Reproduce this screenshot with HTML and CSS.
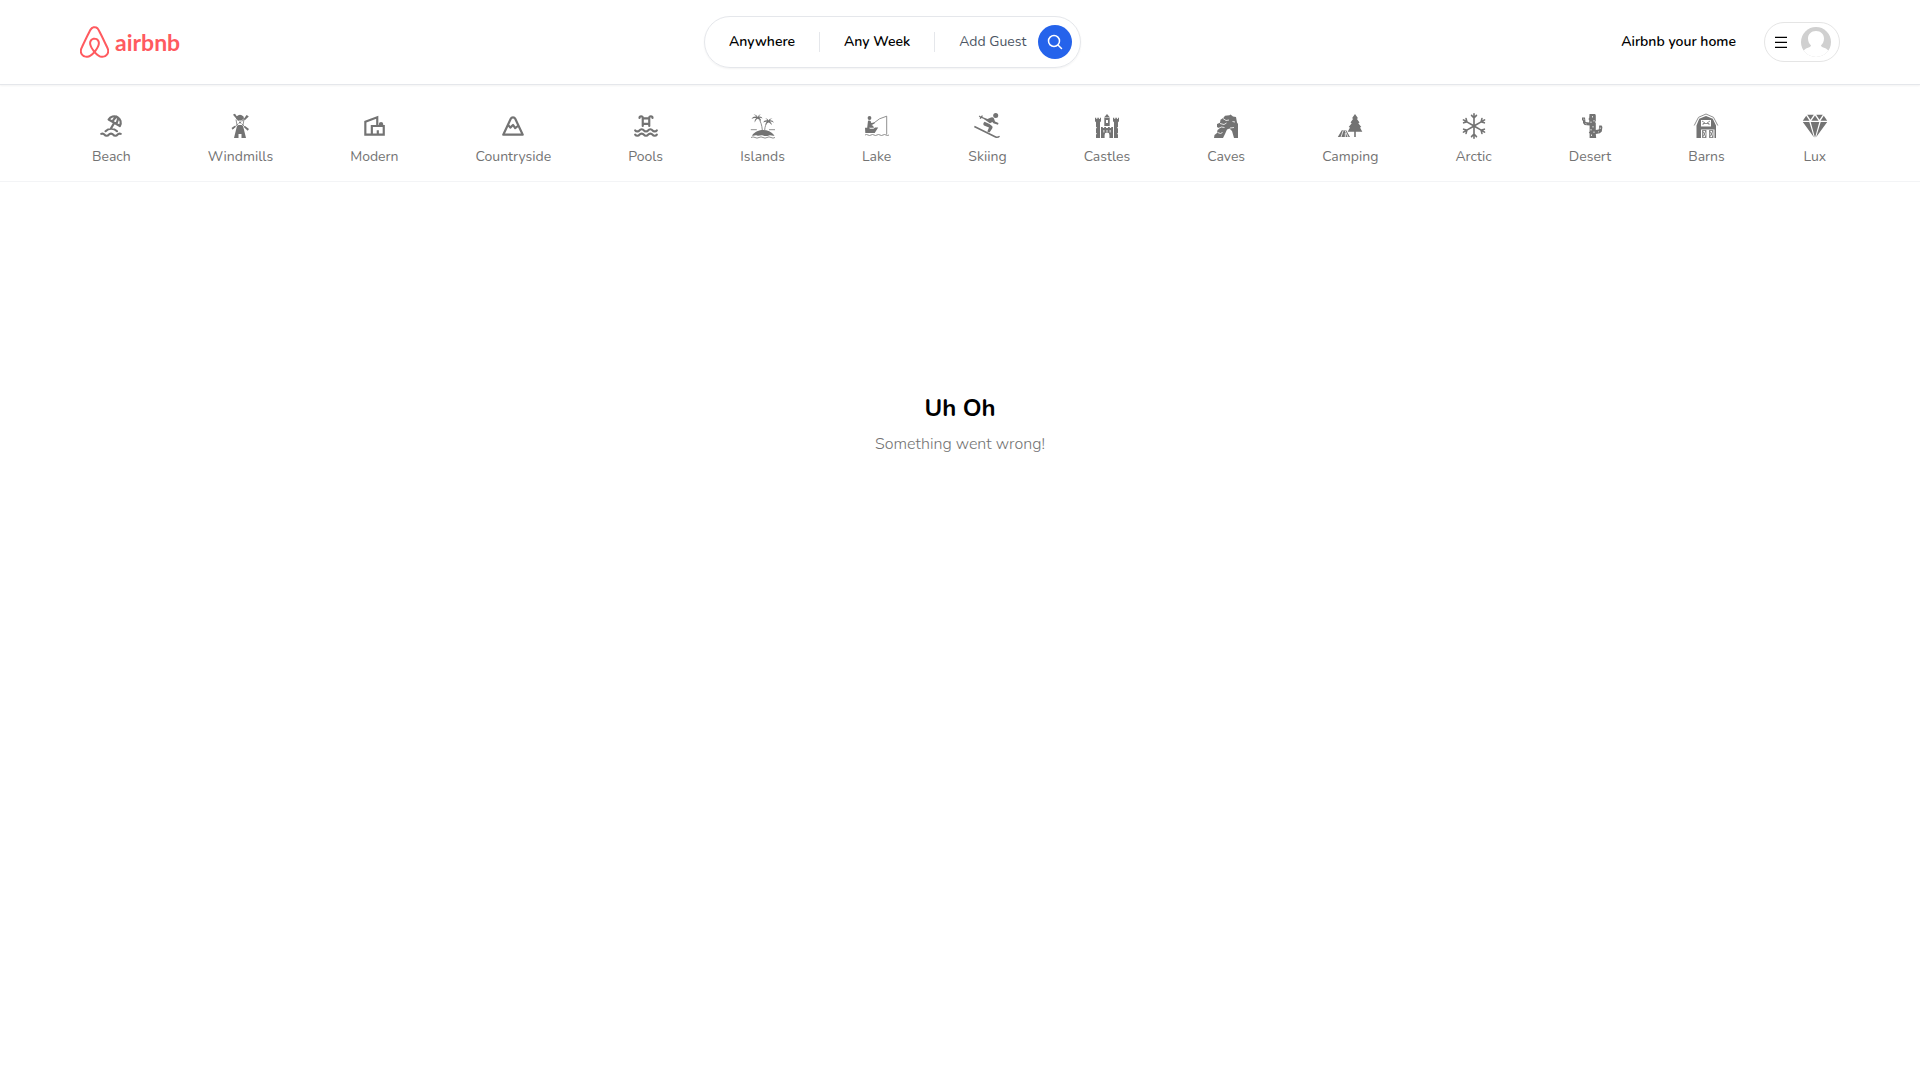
FILE: index.html
```html
<!DOCTYPE html>
<html lang="en">
<head>
<meta charset="UTF-8">
<meta name="viewport" content="width=device-width, initial-scale=1.0">
<title>Airbnb</title>
<link rel="stylesheet" href="styles.css">
</head>
<body>
<header class="header">
  <a class="logo" href="#" aria-label="airbnb home">
    <svg class="logo-mark" viewBox="1 0 22 24" fill="currentColor"><path d="M12.001 18.275c-1.353-1.697-2.148-3.184-2.413-4.457-.263-1.027-.16-1.848.291-2.465.477-.71 1.188-1.056 2.121-1.056s1.643.345 2.12 1.063c.446.61.558 1.432.286 2.465-.291 1.298-1.085 2.785-2.412 4.458zm9.601 1.14c-.185 1.246-1.034 2.28-2.2 2.783-2.253.98-4.483-.583-6.392-2.704 3.157-3.951 3.74-7.028 2.385-9.018-.795-1.14-1.933-1.695-3.394-1.695-2.944 0-4.563 2.49-3.927 5.382.37 1.565 1.352 3.343 2.917 5.332-.98 1.085-1.91 1.856-2.732 2.333-.636.344-1.245.558-1.828.609-2.679.399-4.778-2.2-3.825-4.88.132-.345.395-.98.845-1.961l.025-.053c1.464-3.178 3.242-6.79 5.285-10.795l.053-.132.58-1.116c.45-.822.635-1.19 1.351-1.643.346-.21.77-.315 1.246-.315.954 0 1.698.558 2.016 1.007.158.239.345.557.582.953l.558 1.089.08.159c2.041 4.004 3.821 7.608 5.279 10.794l.026.025.533 1.22.318.764c.243.613.294 1.222.213 1.858zm1.22-2.39c-.186-.583-.505-1.271-.9-2.094v-.03c-1.889-4.006-3.642-7.608-5.307-10.844l-.111-.163C15.317 1.461 14.468 0 12.001 0c-2.44 0-3.476 1.695-4.535 3.898l-.081.16c-1.669 3.236-3.421 6.843-5.303 10.847v.053l-.559 1.22c-.21.504-.317.768-.345.847C-.172 20.74 2.611 24 5.98 24c.027 0 .132 0 .265-.027h.372c1.75-.213 3.554-1.325 5.384-3.317 1.829 1.989 3.635 3.104 5.382 3.317h.372c.133.027.239.027.265.027 3.37.003 6.152-3.261 4.802-6.975z"/></svg>
    <span class="logo-text">airbnb</span>
  </a>

  <!-- Search -->
  <div class="search">
    <button class="search-item">Anywhere</button>
    <button class="search-item search-middle">Any Week</button>
    <button class="search-item search-guest">
      <span>Add Guest</span>
      <span class="search-icon">
        <svg viewBox="0 0 18 18" fill="none" stroke="currentColor" stroke-width="1.5" stroke-linecap="round"><circle cx="8" cy="8" r="5.5"/><path d="M12.2 12.2l3.3 3.3"/></svg>
      </span>
    </button>
  </div>

  <!-- User menu -->
  <div class="user">
    <a class="user-link" href="#">Airbnb your home</a>
    <button class="user-menu" aria-label="Open menu">
      <svg class="menu-icon" viewBox="0 0 16 16" fill="none" stroke="currentColor" stroke-width="1.2"><path d="M2 3.3h12M2 8.3h12M2 13.3h12"/></svg>
      <svg class="avatar" viewBox="0 0 30 30"><defs><clipPath id="round"><circle cx="15" cy="15" r="15"/></clipPath></defs><g clip-path="url(#round)"><path fill="#d0d0d0" d="M0 0h30v30H0z"/><path fill="#fff" d="M15 4c4.8 0 8 3.2 8 7.5 0 3.500-1.500 5.500-3 6.700.1 1.300 1 1.800 3 2.500 3 1 4.500 2.600 5.500 5.300V30h-27v-4c1-2.700 2.500-4.300 5.500-5.300 2-.7 2.900-1.200 3-2.500-1.500-1.200-3-3.200-3-6.700C7 7.200 10.200 4 15 4z"/></g></svg>
    </button>
  </div>
</header>

<!-- Categories -->
<nav class="categories">
  <button class="category">
    <svg class="icon line" viewBox="0 0 24 24"><path d="M17.553 16.75a7.5 7.5 0 0 0-10.606 0M18 3.804A6 6 0 0 0 9.804 6l10.392 6A6 6 0 0 0 18 3.804zM16.732 10c1.658-2.87 2.225-5.644 1.268-6.196-.957-.552-3.075 1.326-4.732 4.196M15 9l-3 5.196M3 19.25a2.4 2.4 0 0 1 1-.25 2.4 2.4 0 0 1 2 1 2.4 2.4 0 0 0 2 1 2.4 2.4 0 0 0 2-1 2.4 2.4 0 0 1 2-1 2.4 2.4 0 0 1 2 1 2.4 2.4 0 0 0 2 1 2.4 2.4 0 0 0 2-1 2.4 2.4 0 0 1 2-1 2.4 2.4 0 0 1 1 .25"/></svg>
    <span>Beach</span>
  </button>
  <button class="category">
    <svg class="icon" viewBox="0 0 26 26"><path d="M9.5 3.500Q13 0 16.500 3.500l.5 2-2.500 2h-3L9 5.500zM10 12.800l1.500-.8h3l1.500.8L19 25h-4.500v-4h-3v4H7z"/><circle cx="13" cy="9.500" r="1"/><path class="thin" d="M9 6.500L10 12M17 6.500L16 12M6.800 2l4.800 6M20.800 3l-6.200 5.500M5.500 16l6-5.500M20.500 16.500l-6-6"/><path d="M6 1.500l2-.8 3.200 4.500-1 .8zM19.500 2l2.300 1.500-4 3.800-1-1.200zM4.500 15l3.200-2.300 1 1.300-3 2.500zM18 13l4 3-1.300 1.800-3.700-3.600z"/></svg>
    <span>Windmills</span>
  </button>
  <button class="category">
    <svg class="icon line square" viewBox="0 0 24 24"><path d="M10 20H4V8l11-4v7M10 20v-8h7.500v-1.800a1 1 0 0 1 2 0V12H21v8zM15.500 20v-4"/></svg>
    <span>Modern</span>
  </button>
  <button class="category">
    <svg class="icon line" viewBox="0 0 24 24"><path d="M3 20h18L14.079 5.388a2.3 2.3 0 0 0-4.158 0zM7.500 11l2 2.500L12 11l2 3 2.500-2"/></svg>
    <span>Countryside</span>
  </button>
  <button class="category">
    <svg class="icon line" viewBox="0 0 24 24"><path d="M2 20a2.4 2.4 0 0 0 2 1 2.4 2.4 0 0 0 2-1 2.4 2.4 0 0 1 2-1 2.4 2.4 0 0 1 2 1 2.4 2.4 0 0 0 2 1 2.4 2.4 0 0 0 2-1 2.4 2.4 0 0 1 2-1 2.4 2.4 0 0 1 2 1 2.4 2.4 0 0 0 2 1 2.4 2.4 0 0 0 2-1M2 16a2.4 2.4 0 0 0 2 1 2.4 2.4 0 0 0 2-1 2.4 2.4 0 0 1 2-1 2.4 2.4 0 0 1 2 1 2.4 2.4 0 0 0 2 1 2.4 2.4 0 0 0 2-1 2.4 2.4 0 0 1 2-1 2.4 2.4 0 0 1 2 1 2.4 2.4 0 0 0 2 1 2.4 2.4 0 0 0 2-1M15 12V4.500a1.5 1.5 0 0 1 3 0M9 12V4.500a1.5 1.5 0 0 0-3 0M15 5H9M9 10h6"/></svg>
    <span>Pools</span>
  </button>
  <button class="category">
    <svg class="icon" viewBox="0 0 26 26"><path d="M2 22.500C5 18.500 9 17 13.200 17s8.200 1.500 11.300 5.500c-2 1-3.300-.8-5.500 0s-3.800.8-6 0-4 .8-6 0-3 .8-5 0z"/><path d="M8 4.200C7 2.500 5.500 1.200 3.500 1.500 5 2 6 2.800 6.500 3.700 4.500 3.200 2.500 4 1.500 6c1.700-1 3.300-1.200 4.800-.8C5 6 4.300 7.500 4.800 9.500 5.500 7.500 6.500 6.500 7.700 5.800c1.500.3 2.800 1.300 3.300 2.800.3-1.800-.5-3-1.800-3.800 1.200-.2 2.300 0 3.300.8-.5-1.800-2-2.400-3.500-2.100.3-1 1-1.600 2-2-1.500-.3-2.700.8-3 2.700z"/><path d="M18.500 7.500C18 6 16.700 5 15 5.200c1.200.4 2 1.200 2.200 2.200-1.700-.4-3.200.4-3.900 2 1.300-.7 2.600-.9 3.900-.6-1.400.6-2 2-1.700 3.700.6-1.700 1.500-2.600 2.700-3 1.700.3 2.800 1.200 3.300 2.800.5-1.700-.4-3-1.800-3.700 1.500-.2 2.800.2 4.200 1.200-.7-2-2.300-2.700-4-2.500.6-.9 1.500-1.500 2.600-1.700-1.700-.6-3.200.2-4 1.900z"/><path class="thin" d="M8.300 5c2.500 3.500 3.700 7.500 4 12M18.300 8.500c-2.600 2.500-3.500 5.500-3.600 8.500M.8 16.700h6M19 16.700h6M1 24.500q2-1.200 4 0t4 0 4 0 4 0 4 0 4 0"/></svg>
    <span>Islands</span>
  </button>
  <button class="category">
    <svg class="icon" viewBox="0 0 26 26"><circle cx="5.500" cy="5" r="1.900"/><path d="M4 7.800q1.500-.8 2.600.2l.7 2 3-.5.4 1L7.500 12l1.500.8 1 2H3.200zM1 14.800h4l1 1h3.500l1.500-1.200h3.200l-3.500 5.300H1.300z"/><path class="thin" d="M8.500 11q7-6.500 14.200-7.800v18.300M1 22q1.500-1 3 0t3 0 3 0 3 0 3 0 3 0 3 0 3 0"/></svg>
    <span>Lake</span>
  </button>
  <button class="category">
    <svg class="icon" viewBox="0 0 26 26"><circle cx="21.700" cy="2.600" r="2.500"/><path d="M5.200 2.400l1.600 1L8 2.300l.8.4-.4 1.400 5.100 1.800 3.500-1.500q2-.6 3 1l1 3 3.500 1.500-.5 1.900-4.600-1.500-1-1.400-2.500 1.400-6.500-4.500-1.900-.7-1 1-.8-.5.300-1.400-1.200-.8zM10.500 8.800l5 2.200 2.500 2q1.200 1 .2 2.400l-2.700 4-2.200-1 1.700-4-5-1.800q-1.600-1.800.5-3.800z"/><path d="M.7 12.700L22 23.200q1.700.6 3.200-.5l.8 1.100q-2 1.900-4.700 1L0 14.200z"/></svg>
    <span>Skiing</span>
  </button>
  <button class="category">
    <svg class="icon" viewBox="0 0 26 26" fill-rule="evenodd"><path d="M13 1l3 3.500h-6zM10.300 5h5.400v8h-5.400zm1.700 2v3h2V7zM1 4.800h1.300V6h1V4.800h1.600V6h1V4.800H7v3.400l-1 1V25H2v-3.500l1-.8-1-.7v-4.500l1.200-.8-1.200-.7V9.200l-1-1zM19 4.800h1.300V6h1V4.800h1.600V6h1V4.800H25v3.400l-1 1V14l-1.200.7 1.200.8V20l-1 .7 1 .8V25h-4V9.200l-1-1zM7 14h1.800v1h1.400v-1h1.800v1h2v-1h1.800v1h1.400v-1H19v11h-3.600v-3a2.400 2.400 0 0 0-4.800 0v3H7zm2.500 3v2.500h.8V17zm3.100 0v2h.8v-2zm3.100 0v2.500h.8V17z"/></svg>
    <span>Castles</span>
  </button>
  <button class="category">
    <svg class="icon" viewBox="0 0 26 26"><path d="M17.500 1.500l-1 .8-4.500.5-1.500 2-3 2-.5 3L4 11v3l2.500 1.500-2 1.500-.5 3-2.500 2-.5 3h9l2-4 2-4.500 2.500-1 2.500 2.500L21 25h4V11l-1-1.500-1-5.500-3-.5z"/><path class="cut" d="M10 5.500l3 2 3-.5M7 10.500l4 1 2.500-1.500M5 15.500l3.500-1.500 3 .5M17 15l4-.5M4.500 19.500l3 1 2-1M19.500 8.500l2.500.5"/></svg>
    <span>Caves</span>
  </button>
  <button class="category">
    <svg class="icon" viewBox="0 0 26 26"><path d="M18 1l3 4.300-1.200.5 2.700 3.700-1.200.7 3 3.800-1.300.6 2.300 4.200h-6.500V24h-1.600v-5.200h-6.500l2.300-4.200-1.300-.6 3-3.800-1.200-.7 2.700-3.700-1.200-.5zM4.800 17.300h4.400L13 24H.8z"/><path class="cut" d="M6.300 17.300L4 24M8.300 20v4M8 17.300l3 6.700"/></svg>
    <span>Camping</span>
  </button>
  <button class="category">
    <svg class="icon" viewBox="0 0 16 16"><path d="M8 16a.5.5 0 0 1-.5-.5v-1.293l-.646.647a.5.5 0 0 1-.707-.708L7.500 12.793V8.866l-3.400 1.963-.496 1.850a.5.5 0 1 1-.966-.26l.237-.882-1.120.646a.5.5 0 0 1-.5-.866l1.120-.646-.884-.237a.5.5 0 1 1 .26-.966l1.848.495L7 8 3.600 6.037l-1.850.495a.5.5 0 0 1-.258-.966l.883-.237-1.120-.646a.5.5 0 1 1 .5-.866l1.120.646-.237-.883a.5.5 0 1 1 .966-.258l.495 1.849L7.500 7.134V3.207L6.147 1.854a.5.5 0 1 1 .707-.708l.646.647V.5a.5.5 0 1 1 1 0v1.293l.647-.647a.5.5 0 1 1 .707.708L8.500 3.207v3.927l3.400-1.963.496-1.850a.5.5 0 1 1 .966.26l-.236.882 1.120-.646a.5.5 0 0 1 .5.866l-1.120.646.883.237a.5.5 0 1 1-.26.966l-1.848-.495L9 8l3.400 1.963 1.849-.495a.5.5 0 0 1 .259.966l-.883.237 1.120.646a.5.5 0 0 1-.5.866l-1.120-.646.236.883a.5.5 0 1 1-.966.258l-.495-1.849-3.400-1.963v3.927l1.353 1.353a.5.5 0 0 1-.707.708l-.647-.647V15.500a.5.5 0 0 1-.5.5z"/></svg>
    <span>Arctic</span>
  </button>
  <button class="category">
    <svg class="icon" viewBox="0 0 26 26"><path d="M12.500 1h5.700l.6 1.500V8l-.8 1 .8 1v7l3-.6.4-3.900h2.400l.8 1.500-.6 4.500-2 1.800-4 .7.4 4h-6.600v-4.500l-.8-1 .8-1v-6l-5-.5-1.600-2V8L5 7V4.500h3l.5 4.500 3.700.5V7l-.8-1 .8-1z"/><path class="cut" d="M15.500 3v1.500M17 7v1.500M14 8.500V10M16 13v1.500M14 16v1.500M17 18.500V20M14.500 21.500V23M6.300 6l1 .5M8.500 10.500l1 .5M23.200 14.500V16M21 18.500l.8.500"/></svg>
    <span>Desert</span>
  </button>
  <button class="category">
    <svg class="icon" viewBox="0 0 26 26" fill-rule="evenodd"><path d="M13 3l6.800 2.800L23 12.500V25h-1.500V16.500H8V25H3.500V12.500l2.700-6.700zM8 7v6.500h10V7z"/><path class="thin" d="M1.200 12.500L5.500 4.300 13 1l7.500 3.300 4.300 8.200M9 8l3 2M17 8l-3 2M10 12v-1.500h6V12M9.500 17.500H13v7H9.500zM16.500 17.500H20v7h-3.500zM9.500 17.500l3.500 7M13 17.500l-3.500 7M16.500 17.500l3.500 7M20 17.500l-3.500 7"/></svg>
    <span>Barns</span>
  </button>
  <button class="category">
    <svg class="icon" viewBox="0 0 26 26"><path d="M5.200 1.700h6.600L8.500 6.700zM14.200 1.700h6.600l-3.300 5zM13 2.500l3.600 5.200H9.400zM4.200 2.700l3.300 5H.8zM21.800 2.700l-3.300 5h6.700zM.8 9h6.500l4.600 15.200zM25.200 9h-6.500l-4.600 15.200zM8.700 9h8.600L13 24.800z"/></svg>
    <span>Lux</span>
  </button>
</nav>

<main class="empty">
  <h1>Uh Oh</h1>
  <p>Something went wrong!</p>
</main>
</body>
</html>
```
FILE: styles.css
```css
* {
  box-sizing: border-box;
}
body {
  margin: 0;
  background-color: #fff;
  color: #000;
  font-family: "Nunito", "Open Sans", sans-serif;
  font-size: 14px;
  line-height: 20px;
}
button {
  margin: 0;
  padding: 0;
  border: none;
  background: none;
  color: inherit;
  font: inherit;
  cursor: pointer;
}
a {
  color: inherit;
  text-decoration: none;
}
svg {
  display: block;
  flex-shrink: 0;
}

/* Header */
.header {
  display: flex;
  align-items: center;
  justify-content: space-between;
  padding: 16px 80px;
  border-bottom: 1px solid #e5e7eb;
  box-shadow: 0 1px 2px rgba(0, 0, 0, 0.05);
}
.logo {
  display: flex;
  align-items: center;
  gap: 6px;
  color: #ff5a5f;
}
.logo-mark {
  width: 29px;
  height: 32px;
}
.logo-text {
  font-family: "Lato", sans-serif;
  font-size: 23px;
  font-weight: 700;
  line-height: 32px;
}
.search {
  display: flex;
  align-items: center;
  padding: 8px 0;
  border: 1px solid #e5e7eb;
  border-radius: 26px;
  box-shadow: 0 1px 2px rgba(0, 0, 0, 0.05);
}
.search-item {
  padding: 0 24px;
  font-weight: 600;
}
.search-middle {
  border-left: 1px solid #e5e7eb;
  border-right: 1px solid #e5e7eb;
}
.search-guest {
  display: flex;
  align-items: center;
  gap: 12px;
  padding-right: 8px;
  color: #4b5563;
  font-weight: 400;
}
.search-icon {
  padding: 8px;
  border-radius: 50%;
  background-color: #2563eb;
  color: #fff;
}
.search-icon svg {
  width: 18px;
  height: 18px;
}
.user {
  display: flex;
  align-items: center;
  gap: 12px;
}
.user-link {
  padding: 12px 16px;
  font-weight: 600;
}
.user-menu {
  display: flex;
  align-items: center;
  gap: 12px;
  padding: 4px 8px;
  border: 1px solid #e5e5e5;
  border-radius: 20px;
}
.menu-icon {
  width: 16px;
  height: 16px;
}
.avatar {
  width: 30px;
  height: 30px;
}

/* Categories */
.categories {
  display: flex;
  align-items: center;
  justify-content: space-between;
  padding: 16px 80px 2px;
  border-bottom: 1px solid #f3f4f6;
}
.category {
  display: flex;
  flex-direction: column;
  align-items: center;
  gap: 8px;
  padding: 12px;
  color: #737373;
}
.icon {
  width: 26px;
  height: 26px;
  fill: currentColor;
}
.line {
  fill: none;
  stroke: currentColor;
  stroke-width: 2;
  stroke-linecap: round;
  stroke-linejoin: round;
}
.square {
  stroke-linecap: butt;
  stroke-linejoin: miter;
}
.thin {
  fill: none;
  stroke: currentColor;
  stroke-width: 0.8;
}
.cut {
  fill: none;
  stroke: #fff;
  stroke-width: 0.8;
}

/* Empty state */
.empty {
  display: flex;
  flex-direction: column;
  align-items: center;
  justify-content: center;
  gap: 8px;
  min-height: 45vh;
  padding-bottom: 2px;
}
.empty h1 {
  margin: 0;
  font-size: 24px;
  font-weight: 700;
  line-height: 32px;
}
.empty p {
  margin: 0;
  color: #737373;
  font-size: 16px;
  font-weight: 300;
  line-height: 24px;
}
```
